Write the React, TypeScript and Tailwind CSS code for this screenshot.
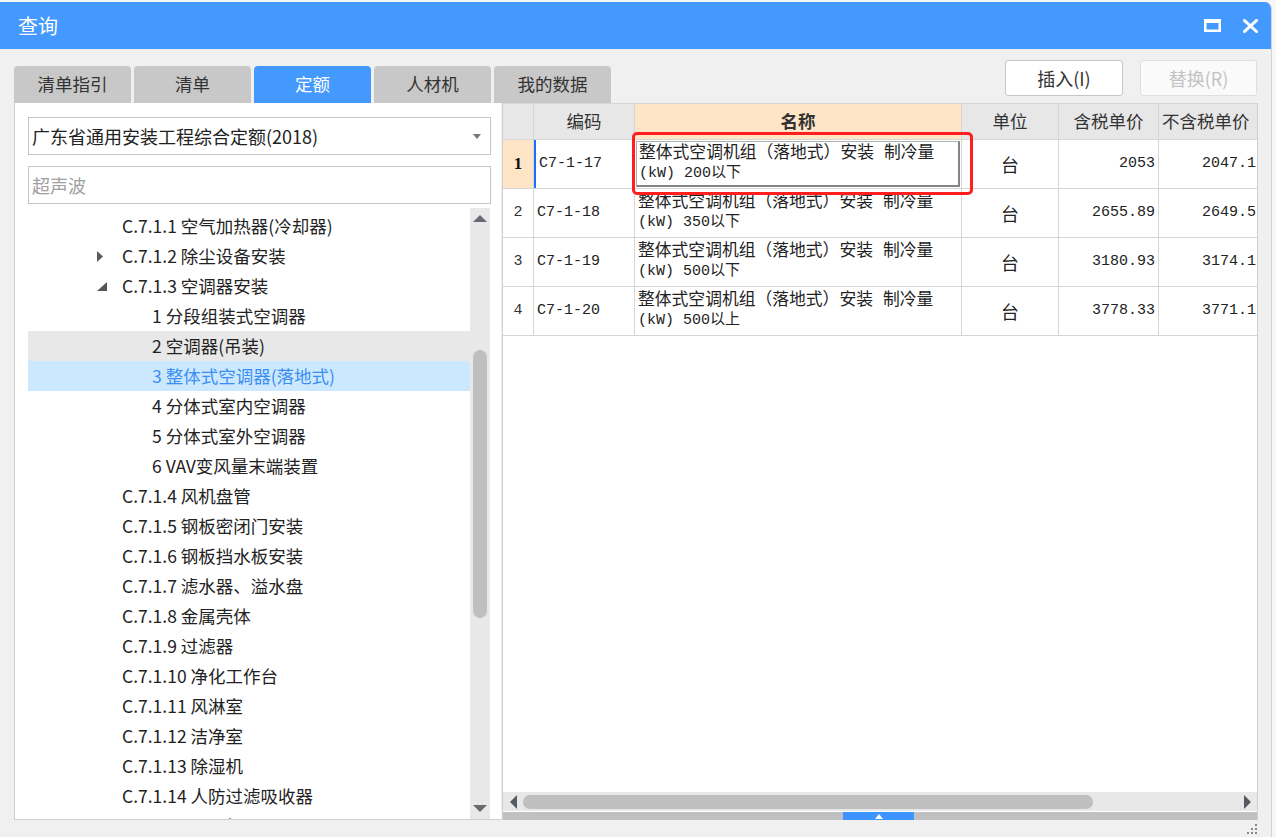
import React from "react";

const UI = { fontFamily: "'Noto Sans CJK SC', 'Noto Sans', sans-serif" };
const GRID = { fontFamily: "'Liberation Mono', 'Noto Sans CJK SC', monospace" };

type TreeItem = { t: string; lvl: 1 | 2; arrow?: "right" | "down"; hover?: boolean; selected?: boolean };

const tree: TreeItem[] = [
  { t: "C.7.1.1 空气加热器(冷却器)", lvl: 1 },
  { t: "C.7.1.2 除尘设备安装", lvl: 1, arrow: "right" },
  { t: "C.7.1.3 空调器安装", lvl: 1, arrow: "down" },
  { t: "1 分段组装式空调器", lvl: 2 },
  { t: "2 空调器(吊装)", lvl: 2, hover: true },
  { t: "3 整体式空调器(落地式)", lvl: 2, selected: true },
  { t: "4 分体式室内空调器", lvl: 2 },
  { t: "5 分体式室外空调器", lvl: 2 },
  { t: "6 VAV变风量末端装置", lvl: 2 },
  { t: "C.7.1.4 风机盘管", lvl: 1 },
  { t: "C.7.1.5 钢板密闭门安装", lvl: 1 },
  { t: "C.7.1.6 钢板挡水板安装", lvl: 1 },
  { t: "C.7.1.7 滤水器、溢水盘", lvl: 1 },
  { t: "C.7.1.8 金属壳体", lvl: 1 },
  { t: "C.7.1.9 过滤器", lvl: 1 },
  { t: "C.7.1.10 净化工作台", lvl: 1 },
  { t: "C.7.1.11 风淋室", lvl: 1 },
  { t: "C.7.1.12 洁净室", lvl: 1 },
  { t: "C.7.1.13 除湿机", lvl: 1 },
  { t: "C.7.1.14 人防过滤吸收器", lvl: 1 },
  { t: "C.7.1.15 通风机", lvl: 1 },
];

const rows = [
  { n: "1", code: "C7-1-17", l2: "(kW) 200以下", p1: "2053", p2: "2047.1" },
  { n: "2", code: "C7-1-18", l2: "(kW) 350以下", p1: "2655.89", p2: "2649.5" },
  { n: "3", code: "C7-1-19", l2: "(kW) 500以下", p1: "3180.93", p2: "3174.1" },
  { n: "4", code: "C7-1-20", l2: "(kW) 500以上", p1: "3778.33", p2: "3771.1" },
];

const tabs = ["清单指引", "清单", "定额", "人材机", "我的数据"];

function Tri({ dir }: { dir: "up" | "down" | "left" | "right" }) {
  if (dir === "up")
    return (
      <svg width="14" height="7" viewBox="0 0 14 7"><path d="M0 7 L7 0 L14 7 Z" fill="#666a72" /></svg>
    );
  if (dir === "down")
    return (
      <svg width="14" height="7" viewBox="0 0 14 7"><path d="M0 0 L14 0 L7 7 Z" fill="#666a72" /></svg>
    );
  if (dir === "left")
    return (
      <svg width="7" height="14" viewBox="0 0 7 14"><path d="M7 0 L7 14 L0 7 Z" fill="#555a62" /></svg>
    );
  return (
    <svg width="7" height="14" viewBox="0 0 7 14"><path d="M0 0 L7 7 L0 14 Z" fill="#555a62" /></svg>
  );
}

export default function App() {
  return (
    <div className="w-[1276px] h-[837px] overflow-hidden bg-[#f6f6f6] pt-[2px]" style={UI}>
      <div className="w-[1272px] h-[835px] flex flex-col rounded-tr-[7px] overflow-hidden bg-[#f0f0f0] border-r border-[#d4d4d4]">
        {/* title bar */}
        <div className="h-[47px] shrink-0 bg-[#4499ff] flex items-center pl-[18px] pr-[13px]">
          <span className="text-white text-[20px] leading-none">查询</span>
          <div className="ml-auto flex items-center gap-[22px]">
            <svg width="17" height="13" viewBox="0 0 17 13">
              <rect x="1.25" y="1.75" width="14.5" height="10" fill="none" stroke="#fff" strokeWidth="2.5" />
              <rect x="0" y="0" width="17" height="4" fill="#fff" />
            </svg>
            <svg width="15" height="14" viewBox="0 0 15 14">
              <path d="M1.5 1.5 L13.5 12.5 M13.5 1.5 L1.5 12.5" stroke="#fff" strokeWidth="3" strokeLinecap="square" />
            </svg>
          </div>
        </div>

        {/* body */}
        <div className="flex-1 flex flex-col pl-[14px] pr-[13px]">
          {/* tabs + buttons */}
          <div className="h-[54px] shrink-0 flex">
            <div className="flex items-end gap-[3px]">
              {tabs.map((t) => (
                <div
                  key={t}
                  className={
                    t === "定额"
                      ? "w-[117px] h-[37px] rounded-t-[4px] bg-[#4499ff] text-white text-[17.5px] flex items-center justify-center"
                      : "w-[117px] h-[37px] rounded-t-[4px] bg-[#c8c8c8] text-[#333] text-[17.5px] flex items-center justify-center"
                  }
                >
                  {t}
                </div>
              ))}
            </div>
            <div className="ml-auto flex items-start gap-[17px] pt-[11px] pr-[1px]">
              <div className="w-[118px] h-[36px] bg-white border border-[#c6c6c6] rounded-[3px] flex items-center justify-center text-[18px] text-[#333]">
                插入(I)
              </div>
              <div className="w-[117px] h-[36px] bg-[#fafafa] border border-[#dedede] rounded-[3px] flex items-center justify-center text-[18px] text-[#c2c2c2]">
                替换(R)
              </div>
            </div>
          </div>

          {/* panels */}
          <div className="h-[717px] shrink-0 flex gap-[1px]">
            {/* left panel */}
            <div className="w-[487px] h-full bg-white border-l border-b border-[#cfcfcf] flex flex-col pl-[13px] pr-[10px] pt-[14px]">
              <div className="h-[38px] shrink-0 border border-[#c6c6c6] flex items-center pl-[3px] pr-[9px]">
                <span className="text-[18px] text-[#222]">广东省通用安装工程综合定额(2018)</span>
                <svg className="ml-auto" width="8" height="5" viewBox="0 0 8 5"><path d="M0 0 L8 0 L4 5 Z" fill="#777" /></svg>
              </div>
              <div className="h-[38px] shrink-0 mt-[11px] border border-[#c6c6c6] flex items-center pl-[3px]">
                <span className="text-[18px] text-[#a0a0a0]">超声波</span>
              </div>
              <div className="flex-1 mt-[4px] flex overflow-hidden">
                <div className="w-[442px] pt-[3px] overflow-hidden">
                  {tree.map((it) => (
                    <div
                      key={it.t}
                      className={
                        "h-[30px] flex items-center " +
                        (it.selected ? "bg-[#cce8ff] text-[#3a8ef0]" : it.hover ? "bg-[#e8e8e8] text-[#222]" : "text-[#222]") +
                        (it.lvl === 1 ? " pl-[69px]" : " pl-[124px]")
                      }
                    >
                      {it.lvl === 1 && (
                        <div className="w-[25px] flex items-center">
                          {it.arrow === "right" && (
                            <svg width="7" height="11" viewBox="0 0 7 11"><path d="M0 0 L6 5.5 L0 11 Z" fill="#5a5a5a" /></svg>
                          )}
                          {it.arrow === "down" && (
                            <svg width="10" height="9" viewBox="0 0 10 9"><path d="M10 0 L10 9 L0 9 Z" fill="#555" /></svg>
                          )}
                        </div>
                      )}
                      <span className="text-[17.5px] whitespace-nowrap">{it.t}</span>
                    </div>
                  ))}
                </div>
                <div className="w-[20px] bg-[#e8e8e8] flex flex-col items-center">
                  <div className="h-[18px] shrink-0 flex items-center justify-center pt-[2px]">
                    <Tri dir="up" />
                  </div>
                  <div className="flex-1">
                    <div className="w-[14px] h-[268px] mt-[124px] rounded-full bg-[#bfbfbf]" />
                  </div>
                  <div className="h-[16px] shrink-0 flex items-start justify-center pt-[2px]">
                    <Tri dir="down" />
                  </div>
                </div>
              </div>
            </div>

            {/* grid panel */}
            <div className="relative w-[756px] h-full bg-white border-l border-r border-[#cfcfcf] flex flex-col overflow-hidden">
              {/* header */}
              <div className="h-[37px] shrink-0 flex border-t border-b border-[#d6d6d6] bg-[#e7e7e7] text-[17.5px] text-[#333]">
                <div className="w-[31px] shrink-0 border-r border-[#d6d6d6]" />
                <div className="w-[101px] shrink-0 border-r border-[#d6d6d6] flex items-center justify-center">编码</div>
                <div className="w-[327px] shrink-0 border-r border-[#d6d6d6] bg-[#fde5c6] flex items-center justify-center font-bold">名称</div>
                <div className="w-[97px] shrink-0 border-r border-[#d6d6d6] flex items-center justify-center">单位</div>
                <div className="w-[100px] shrink-0 border-r border-[#d6d6d6] flex items-center justify-center">含税单价</div>
                <div className="w-[97px] shrink-0 flex items-center pl-[3px] whitespace-nowrap">不含税单价</div>
              </div>
              {rows.map((r, i) => (
                <div key={r.code} className="h-[49px] shrink-0 flex border-b border-[#d6d6d6] text-[#222]" style={GRID}>
                  <div
                    className={
                      "w-[31px] shrink-0 border-r border-[#d6d6d6] flex items-center justify-center " +
                      (i === 0 ? "bg-[#fde5c6] font-bold text-[17px] text-[#111]" : "text-[15px] text-[#333]")
                    }
                    style={i === 0 ? { fontFamily: "'Liberation Serif', serif" } : undefined}
                  >
                    {r.n}
                  </div>
                  <div
                    className={
                      "w-[101px] shrink-0 border-r border-[#d6d6d6] flex items-center pl-[3px] text-[15px] " +
                      (i === 0 ? "border-l-2 border-l-[#1a6fff]" : "")
                    }
                  >
                    {r.code}
                  </div>
                  <div className="w-[327px] shrink-0 border-r border-[#d6d6d6] flex">
                    <div
                      className={
                        "flex-1 flex flex-col justify-center pl-[2px] text-[15px] leading-[20px] " +
                        (i === 0
                          ? "m-[1px] border-t border-l border-[#b0b0b0] border-r-2 border-b-2 border-r-[#858585] border-b-[#858585]"
                          : "pl-[3px]")
                      }
                    >
                      <div className="whitespace-nowrap text-[16.8px]">整体式空调机组（落地式）安装 制冷量</div>
                      <div className="whitespace-nowrap">{r.l2}</div>
                    </div>
                  </div>
                  <div className="w-[97px] shrink-0 border-r border-[#d6d6d6] flex items-center justify-center text-[18px]" style={UI}>
                    台
                  </div>
                  <div className="w-[100px] shrink-0 border-r border-[#d6d6d6] flex items-center justify-end pr-[3px] text-[15px]">
                    {r.p1}
                  </div>
                  <div className="w-[97px] shrink-0 flex items-center justify-end pr-[0px] text-[15px]">{r.p2}</div>
                </div>
              ))}
              <div className="flex-1" />
              {/* horizontal scrollbar */}
              <div className="h-[19px] shrink-0 bg-[#e8e8e8] flex items-center">
                <div className="w-[20px] flex justify-center">
                  <Tri dir="left" />
                </div>
                <div className="w-[570px] h-[14px] rounded-full bg-[#bfbfbf]" />
                <div className="ml-auto w-[20px] flex justify-center">
                  <Tri dir="right" />
                </div>
              </div>
              <div className="h-[1px] shrink-0 bg-white" />
              <div className="h-[8px] shrink-0 bg-[#c0c0c0] flex">
                <div className="ml-[340px] w-[71px] h-full bg-[#3d94ff] flex items-center justify-center">
                  <svg width="8" height="5" viewBox="0 0 8 5"><path d="M0 5 L4 0 L8 5 Z" fill="#fff" /></svg>
                </div>
              </div>

              {/* red highlight box */}
              <div className="absolute left-[129px] top-[29px] w-[341px] h-[63px] border-[3px] border-[#ff1f1f] rounded-[5px]" />
            </div>
          </div>

          {/* bottom strip with resize grip */}
          <div className="flex-1 flex justify-end items-end pb-[1px]">
            <svg width="12" height="12" viewBox="0 0 12 12">
              <rect x="9" y="0" width="2" height="2" fill="#888" />
              <rect x="9" y="4" width="2" height="2" fill="#888" />
              <rect x="5" y="4" width="2" height="2" fill="#888" />
              <rect x="9" y="8" width="2" height="2" fill="#888" />
              <rect x="5" y="8" width="2" height="2" fill="#888" />
              <rect x="1" y="8" width="2" height="2" fill="#888" />
            </svg>
          </div>
        </div>
      </div>
    </div>
  );
}
